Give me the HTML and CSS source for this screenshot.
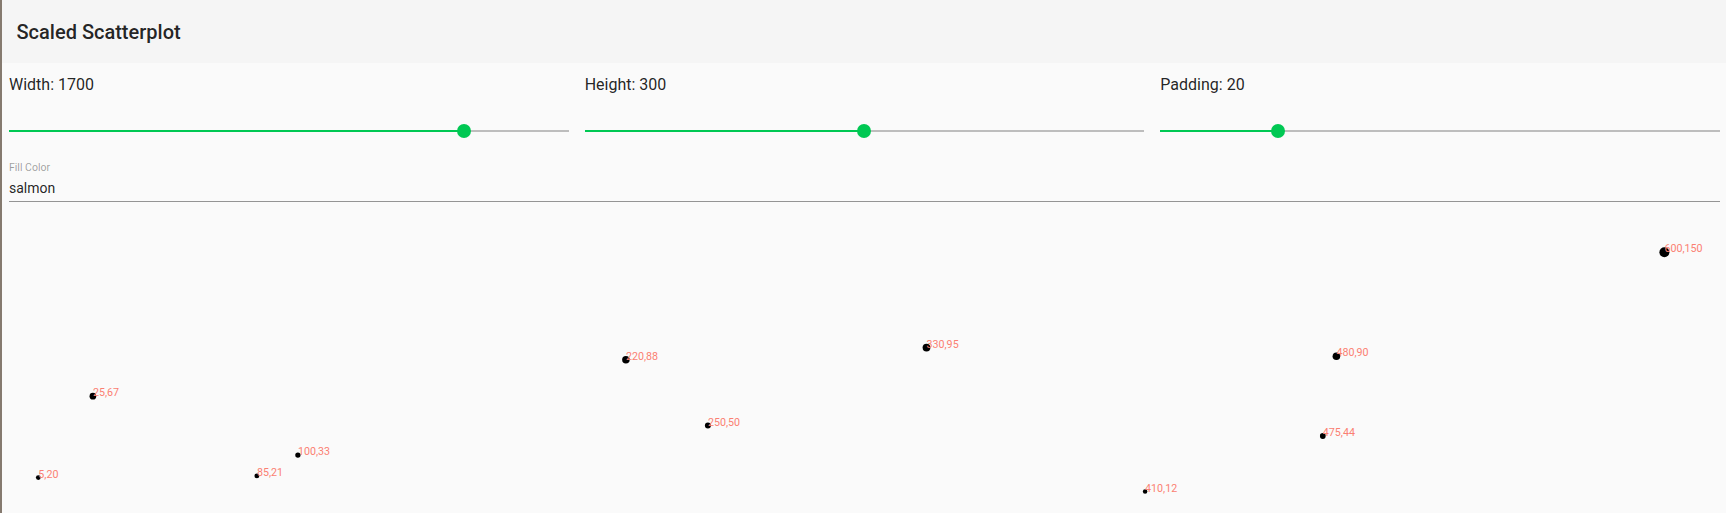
FILE: index.html
```html
<!DOCTYPE html>
<html lang="en">
<head>
<meta charset="utf-8">
<title>Scaled Scatterplot</title>
<link rel="stylesheet" href="styles.css">
</head>
<body>
<header class="appbar">
  <h1 class="title">Scaled Scatterplot</h1>
</header>
<main class="content">
  <div class="controls">
    <div class="control">
      <div class="control-label">Width: 1700</div>
      <div class="slider">
        <div class="track">
          <div class="fill" style="width:81.3%"></div>
          <div class="thumb" style="left:81.3%"></div>
        </div>
      </div>
    </div>
    <div class="control">
      <div class="control-label">Height: 300</div>
      <div class="slider">
        <div class="track">
          <div class="fill" style="width:50%"></div>
          <div class="thumb" style="left:50%"></div>
        </div>
      </div>
    </div>
    <div class="control">
      <div class="control-label">Padding: 20</div>
      <div class="slider">
        <div class="track">
          <div class="fill" style="width:21%"></div>
          <div class="thumb" style="left:21%"></div>
        </div>
      </div>
    </div>
  </div>
  <div class="field">
    <label class="field-label" for="fill">Fill Color</label>
    <input class="field-input" id="fill" type="text" value="salmon">
  </div>
  <svg class="plot" width="1711" height="300" viewBox="0 0 1711 300">
    <g class="dots">
      <circle cx="29.3" cy="245.6" r="2.4"/>
      <circle cx="83.9" cy="164.2" r="3.34"/>
      <circle cx="247.9" cy="243.9" r="2.42"/>
      <circle cx="288.9" cy="223.1" r="2.66"/>
      <circle cx="616.9" cy="127.8" r="3.76"/>
      <circle cx="698.9" cy="193.6" r="3"/>
      <circle cx="917.5" cy="115.6" r="3.9"/>
      <circle cx="1136.1" cy="259.5" r="2.24"/>
      <circle cx="1313.8" cy="204" r="2.88"/>
      <circle cx="1327.4" cy="124.3" r="3.8"/>
      <circle cx="1655.4" cy="20.3" r="5"/>
    </g>
    <g class="labels">
      <text x="29.3" y="245.6">5,20</text>
      <text x="83.9" y="164.2">25,67</text>
      <text x="247.9" y="243.9">85,21</text>
      <text x="288.9" y="223.1">100,33</text>
      <text x="616.9" y="127.8">220,88</text>
      <text x="698.9" y="193.6">250,50</text>
      <text x="917.5" y="115.6">330,95</text>
      <text x="1136.1" y="259.5">410,12</text>
      <text x="1313.8" y="204">475,44</text>
      <text x="1327.4" y="124.3">480,90</text>
      <text x="1655.4" y="20.3">600,150</text>
    </g>
  </svg>
</main>
</body>
</html>
```

FILE: styles.css
```css
html, body {
  margin: 0;
  padding: 0;
  height: 100%;
  overflow: hidden;
}

body {
  background: #fafafa;
  border-left: 2px solid #857a6f;
  font-family: Roboto, "Liberation Sans", Arial, sans-serif;
  color: rgba(0, 0, 0, 0.87);
}

.appbar {
  height: 63px;
  background: #f5f5f5;
  display: flex;
  align-items: center;
  padding-left: 14.5px;
}

.title {
  margin: 0;
  font-size: 20px;
  font-weight: 500;
  line-height: 1.2;
  color: rgba(0, 0, 0, 0.87);
}

.content {
  padding: 9.5px 6px 0 7px;
}

.controls {
  display: grid;
  grid-template-columns: repeat(3, 1fr);
  column-gap: 16px;
}

.control-label {
  font-size: 16px;
  line-height: 24px;
  color: rgba(0, 0, 0, 0.87);
}

.slider {
  height: 20px;
  margin-top: 24.2px;
  display: flex;
  align-items: center;
}

.track {
  position: relative;
  width: 100%;
  height: 2px;
  background: #bdbdbd;
}

.fill {
  height: 100%;
  background: #00c853;
}

.thumb {
  position: absolute;
  top: 50%;
  width: 14px;
  height: 14px;
  border-radius: 50%;
  background: #00c853;
  transform: translate(-50%, -50%);
}

.field {
  margin-top: 22px;
  display: flex;
  flex-direction: column;
  border-bottom: 1px solid #949494;
  padding-bottom: 2.6px;
}

.field-label {
  font-size: 10.5px;
  line-height: 10.5px;
  color: rgba(0, 0, 0, 0.38);
}

.field-input {
  margin: 4.5px 0 0 0;
  padding: 0;
  border: none;
  outline: none;
  background: transparent;
  font-family: Roboto, "Liberation Sans", Arial, sans-serif;
  font-size: 14px;
  line-height: 21px;
  height: 21px;
  color: rgba(0, 0, 0, 0.87);
}

.plot {
  display: block;
  margin-top: 29.3px;
  overflow: visible;
}

.dots circle {
  fill: #000;
}

.labels text {
  font-family: Roboto, "Liberation Sans", Arial, sans-serif;
  font-size: 10.7px;
  fill: salmon;
}
```
